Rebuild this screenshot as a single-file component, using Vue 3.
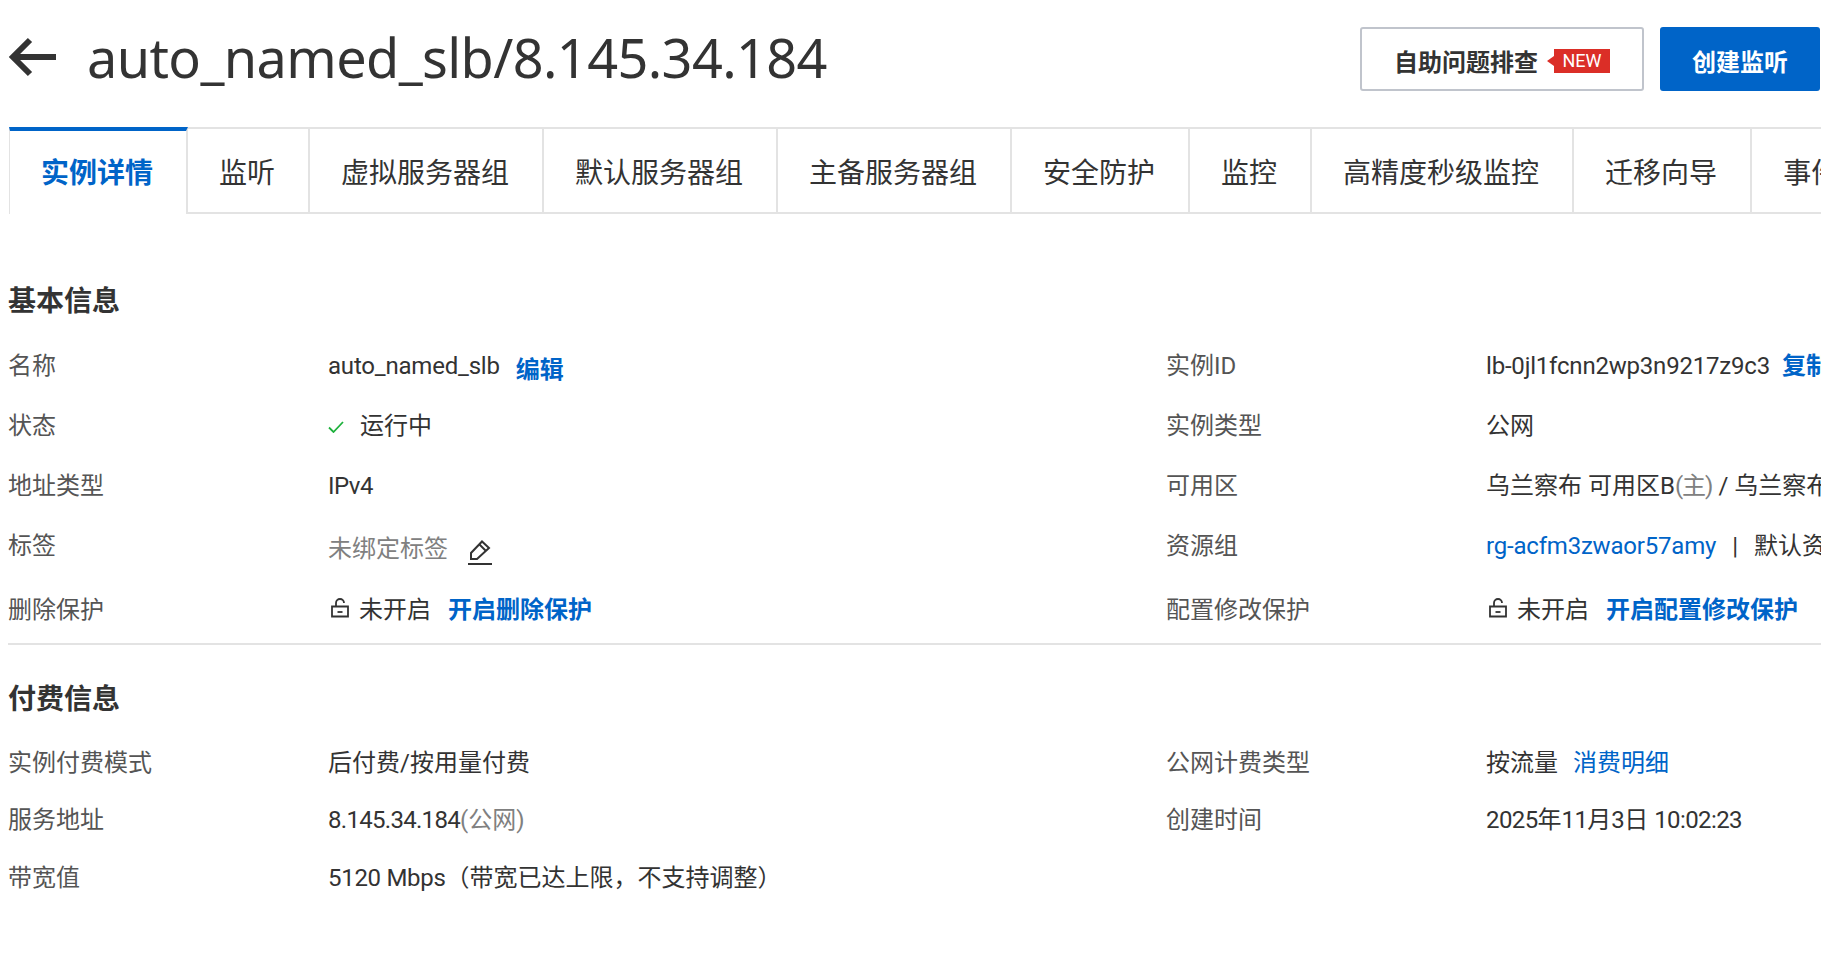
<script setup>
const tabs = ['监听','虚拟服务器组','默认服务器组','主备服务器组','安全防护','监控','高精度秒级监控','迁移向导','事件']
</script>

<template>
  <div class="page">
    <header class="head">
      <div class="title-wrap">
        <svg class="back" width="50" height="40" viewBox="0 0 50 40" fill="none" stroke="#333" stroke-width="6"><path d="M49 20H6"/><path d="M23 3 6 20l17 17"/></svg>
        <h1 class="title">auto_named_slb/8.145.34.184</h1>
      </div>
      <div class="actions">
        <button class="btn-outline">自助问题排查<span class="new">NEW</span></button>
        <button class="btn-primary">创建监听</button>
      </div>
    </header>

    <nav class="tabs">
      <div class="tab active">实例详情</div>
      <div v-for="t in tabs" :key="t" class="tab">{{ t }}</div>
    </nav>

    <section class="basic">
      <h2 class="heading">基本信息</h2>
      <div class="grid rows-basic">
        <div class="label">名称</div>
        <div class="value"><span class="txt">auto_named_slb</span><a class="link bold offset">编辑</a></div>
        <div class="label">实例ID</div>
        <div class="value"><span class="txt">lb-0jl1fcnn2wp3n9217z9c3</span><a class="link bold tiny">复制</a></div>

        <div class="label">状态</div>
        <div class="value">
          <svg class="check" width="16" height="12" viewBox="0 0 16 12" fill="none" stroke="#1eb13c" stroke-width="1.8"><path d="M1 6.5 5.5 11 15 1"/></svg>运行中
        </div>
        <div class="label">实例类型</div>
        <div class="value">公网</div>

        <div class="label">地址类型</div>
        <div class="value"><span class="ipv">IPv4</span></div>
        <div class="label">可用区</div>
        <div class="value"><span>乌兰察布 可用区B<span class="grey tight">(主)</span> / 乌兰察布 可用区C(备)</span></div>

        <div class="label">标签</div>
        <div class="value offset-block"><span class="grey">未绑定标签</span>
          <svg class="edit" width="24" height="26" viewBox="0 0 24 26" fill="none" stroke="#333" stroke-width="2"><path d="M3 20V14L14 2.5 21 9 9 20Z"/><path d="M11.5 5.5 18 12"/><path d="M0 25H24"/></svg>
        </div>
        <div class="label">资源组</div>
        <div class="value"><a class="link txt">rg-acfm3zwaor57amy</a><span class="pipe">|</span>默认资源组</div>

        <div class="label">删除保护</div>
        <div class="value">
          <svg class="lock" width="18" height="20" viewBox="0 0 18 20" fill="none" stroke="#333" stroke-width="1.8"><path d="M1 8.5H17V18.5H1Z"/><path d="M5 8.5V5a4 4 0 0 1 8 0"/><path d="M6.5 14H11.5"/></svg>未开启<a class="link bold gap">开启删除保护</a>
        </div>
        <div class="label">配置修改保护</div>
        <div class="value">
          <svg class="lock" width="18" height="20" viewBox="0 0 18 20" fill="none" stroke="#333" stroke-width="1.8"><path d="M1 8.5H17V18.5H1Z"/><path d="M5 8.5V5a4 4 0 0 1 8 0"/><path d="M6.5 14H11.5"/></svg>未开启<a class="link bold gap">开启配置修改保护</a>
        </div>
      </div>
    </section>

    <section class="billing">
      <h2 class="heading">付费信息</h2>
      <div class="grid rows-billing">
        <div class="label">实例付费模式</div>
        <div class="value">后付费/按用量付费</div>
        <div class="label">公网计费类型</div>
        <div class="value">按流量<a class="link detail">消费明细</a></div>

        <div class="label">服务地址</div>
        <div class="value"><span class="ip">8.145.34.184</span><span class="grey">(公网)</span></div>
        <div class="label">创建时间</div>
        <div class="value"><span><span class="num">2025</span>年<span class="num">11</span>月<span class="num">3</span>日 <span class="num">10:02:23</span></span></div>

        <div class="label">带宽值</div>
        <div class="value"><span><span class="mbps">5120 Mbps</span>（带宽已达上限，不支持调整）</span></div>
      </div>
    </section>
  </div>
</template>

<style>
html, body { margin: 0; overflow: hidden; background: #fff; }
</style>

<style scoped>
.page {
  width: 1821px;
  height: 954px;
  overflow: hidden;
  box-sizing: border-box;
  padding-left: 8px;
  font-family: Roboto, "Noto Sans CJK SC", sans-serif;
  color: #333;
  white-space: nowrap;
}
.head {
  display: flex;
  justify-content: space-between;
  height: 127px;
  box-sizing: border-box;
  padding-top: 25px;
}
.title-wrap { display: flex; align-items: center; height: 64px; }
.back { margin: 0 30px 0 -1px; }
.title { margin: 0; font-family: "Noto Sans", "Noto Sans CJK SC", sans-serif; font-size: 54px; letter-spacing: -0.6px; font-weight: 400; line-height: 64px; }
.actions { display: flex; gap: 16px; margin: 2px 1px 0 0; }
button { font-family: inherit; cursor: pointer; }
.btn-outline {
  width: 284px; height: 64px; box-sizing: border-box;
  background: #fff; border: 2px solid #c0c4cc; border-radius: 3px;
  color: #333; font-size: 24px; font-weight: 700; padding: 3px 0 0;
  display: flex; align-items: center; justify-content: center;
}
.new {
  position: relative; margin-left: 16px; width: 56px; height: 24px;
  background: #db2e27; color: #fff; font-size: 18px; font-weight: 400;
  line-height: 24px; text-align: center;
}
.new::before {
  content: ""; position: absolute; left: -7px; top: 7px;
  border-top: 5px solid transparent; border-bottom: 5px solid transparent;
  border-right: 7px solid #db2e27;
}
.btn-primary {
  width: 160px; height: 64px; background: #0064c8; border: none; border-radius: 3px;
  color: #fff; font-size: 24px; font-weight: 700; padding: 3px 0 0;
}
.tabs {
  display: flex; height: 87px; box-sizing: border-box; margin-left: 1px;
  border-top: 2px solid #e3e3e3; border-bottom: 2px solid #e3e3e3;
}
.tab {
  flex: none; box-sizing: border-box; padding: 0 33px 0 31px; height: 83px;
  border-right: 2px solid #e3e3e3;
  font-size: 28px; line-height: 90px; color: #333;
}
.tab.active {
  position: relative; margin-top: -2px; height: 87px; background: #fff;
  border-top: 4px solid #0064c8; border-left: 1px solid #e3e3e3;
  color: #0064c8; font-weight: 700; line-height: 86px; padding: 0 31px;
  width: 179px; margin-bottom: -2px;
}
.basic { padding-top: 66px; }
.billing { padding-top: 33px; }
.heading { margin: 0; font-size: 28px; font-weight: 700; line-height: 44px; color: #333; }
.basic > .grid { margin-top: 10px; border-bottom: 2px solid #e3e3e3; padding-bottom: 2px; }
.billing > .grid { margin-top: 11px; }
.grid { display: grid; grid-template-columns: 320px 838px 320px 1fr; align-items: center; }
.rows-basic { grid-template-rows: 60px 60px 60px 60px 67px; }
.rows-billing { grid-template-rows: 56px 58px 58px; }
.label { font-size: 24px; color: #555; line-height: 32px; padding-top: 4px; }
.value { font-size: 24px; color: #333; display: flex; align-items: center; min-width: 0; line-height: 32px; padding-top: 4px; }
.txt { letter-spacing: -0.2px; }
.ipv { letter-spacing: -0.5px; }
.num { letter-spacing: -0.6px; }
.ip { letter-spacing: -0.7px; }
.mbps { letter-spacing: -0.3px; }
.tight { letter-spacing: -1px; }
.grey { color: #808080; }
.link { color: #0064c8; }
.bold { font-weight: 700; }
.offset { margin-left: 16px; position: relative; top: 4px; }
.tiny { margin-left: 12px; }
.gap { margin-left: 17px; }
.detail { margin-left: 15px; }
.check { margin-right: 16px; position: relative; top: 1px; }
.lock { margin-right: 10px; margin-left: 3px; position: relative; top: -2px; }
.offset-block { position: relative; top: 3px; }
.edit { margin-left: 20px; position: relative; top: 3px; }
.pipe { margin: 0 16px; }
</style>
